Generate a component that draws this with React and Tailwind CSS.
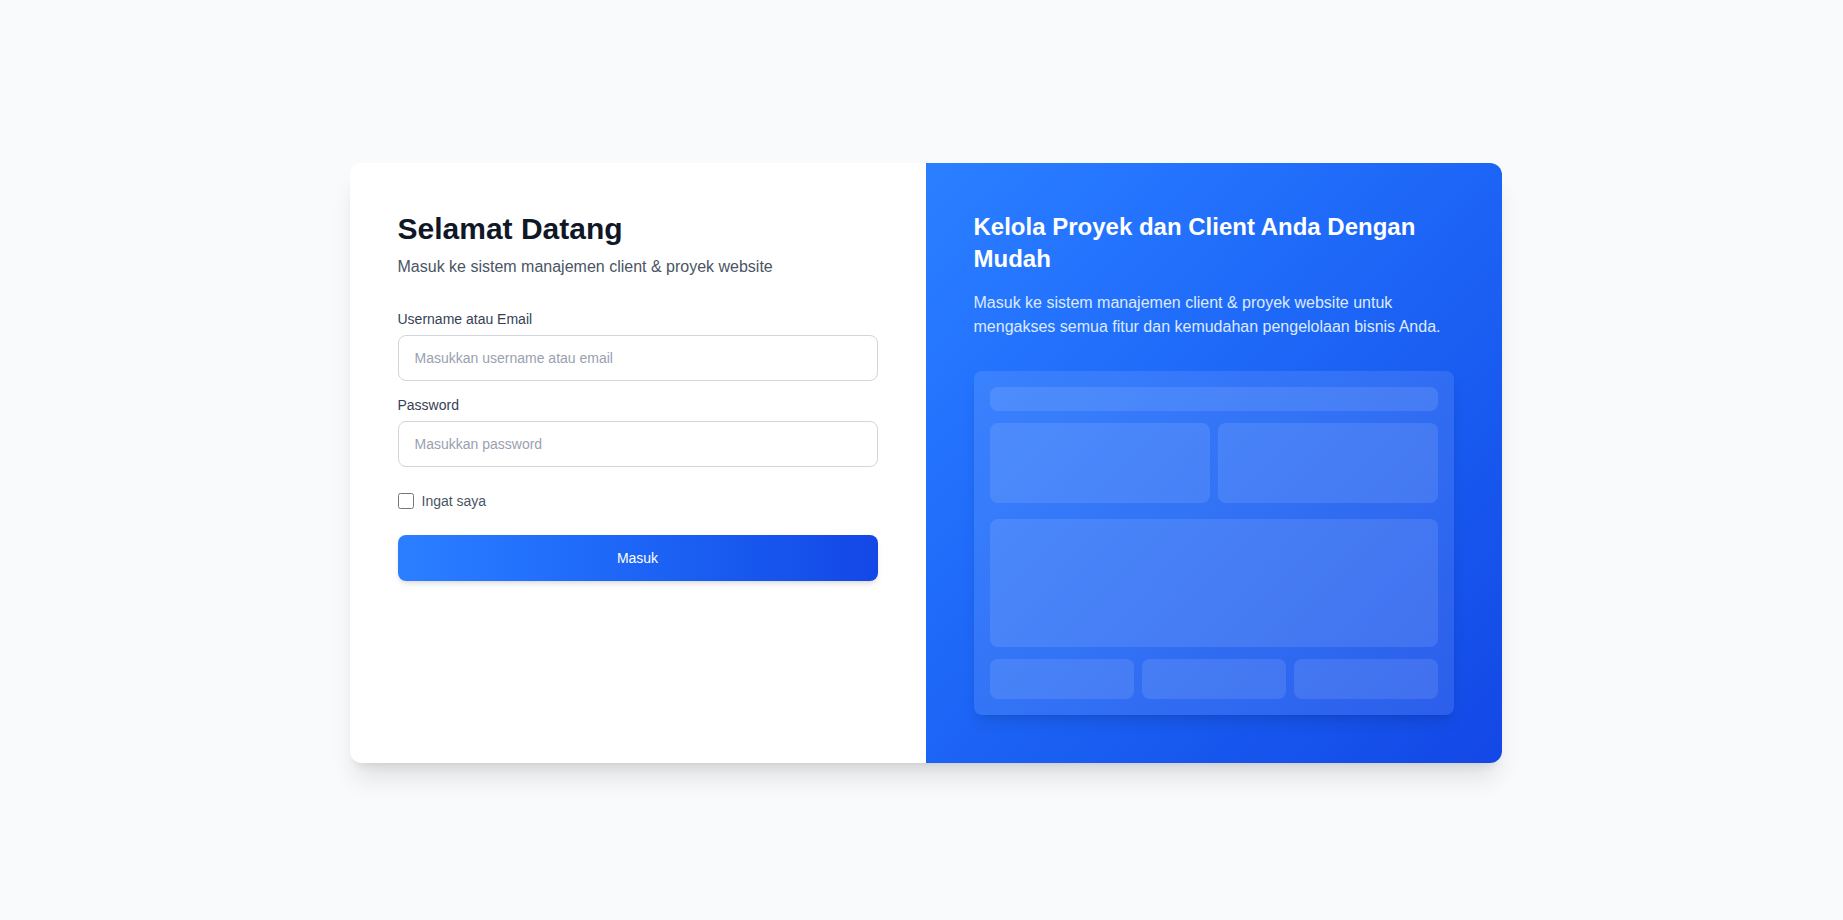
export default function App() {
  return (
    <div
      className="min-h-screen bg-slate-50 flex items-center justify-center pl-2 pt-1.5"
      style={{ fontFamily: '"Liberation Sans", Arial, sans-serif' }}
    >
      <div className="w-full max-w-6xl h-[600px] bg-white rounded-xl shadow-xl overflow-hidden flex">
        {/* Left: form */}
        <div className="w-1/2 p-12">
          <h1 className="text-3xl font-bold text-gray-900 mb-2">Selamat Datang</h1>
          <p className="text-base text-gray-600 mb-[30px]">
            Masuk ke sistem manajemen client &amp; proyek website
          </p>

          <form onSubmit={(e) => e.preventDefault()}>
            <div className="mb-[14px]">
              <label className="block text-sm font-medium text-gray-700 mb-1.5">
                Username atau Email
              </label>
              <input
                type="text"
                placeholder="Masukkan username atau email"
                className="w-full px-4 py-3 text-sm border border-gray-300 rounded-lg placeholder:text-gray-400 focus:outline-none"
              />
            </div>

            <div className="mb-6">
              <label className="block text-sm font-medium text-gray-700 mb-1.5">
                Password
              </label>
              <input
                type="password"
                placeholder="Masukkan password"
                className="w-full px-4 py-3 text-sm border border-gray-300 rounded-lg placeholder:text-gray-400 focus:outline-none"
              />
            </div>

            <label className="flex items-center gap-2 mb-6">
              <input type="checkbox" className="w-4 h-4 rounded border-gray-400" />
              <span className="text-sm text-gray-600">Ingat saya</span>
            </label>

            <button
              type="submit"
              className="w-full py-[13px] text-sm font-medium text-white rounded-lg bg-linear-to-r from-blue-500 to-blue-700 shadow-md"
            >
              Masuk
            </button>
          </form>
        </div>

        {/* Right: promo */}
        <div className="w-1/2 p-12 bg-linear-to-br from-blue-500 to-blue-700">
          <h2 className="text-2xl font-bold text-white mb-4">
            Kelola Proyek dan Client Anda Dengan Mudah
          </h2>
          <p className="text-base leading-6 text-blue-100 mb-8">
            Masuk ke sistem manajemen client &amp; proyek website untuk mengakses semua fitur dan
            kemudahan pengelolaan bisnis Anda.
          </p>

          {/* Dashboard mockup */}
          <div className="bg-white/10 rounded-lg p-4 shadow-lg">
            <div className="h-6 bg-white/10 rounded-lg mb-3" />
            <div className="grid grid-cols-2 gap-2 mb-4">
              <div className="h-20 bg-white/10 rounded-lg" />
              <div className="h-20 bg-white/10 rounded-lg" />
            </div>
            <div className="h-32 bg-white/10 rounded-lg mb-3" />
            <div className="grid grid-cols-3 gap-2">
              <div className="h-10 bg-white/10 rounded-lg" />
              <div className="h-10 bg-white/10 rounded-lg" />
              <div className="h-10 bg-white/10 rounded-lg" />
            </div>
          </div>
        </div>
      </div>
    </div>
  );
}
